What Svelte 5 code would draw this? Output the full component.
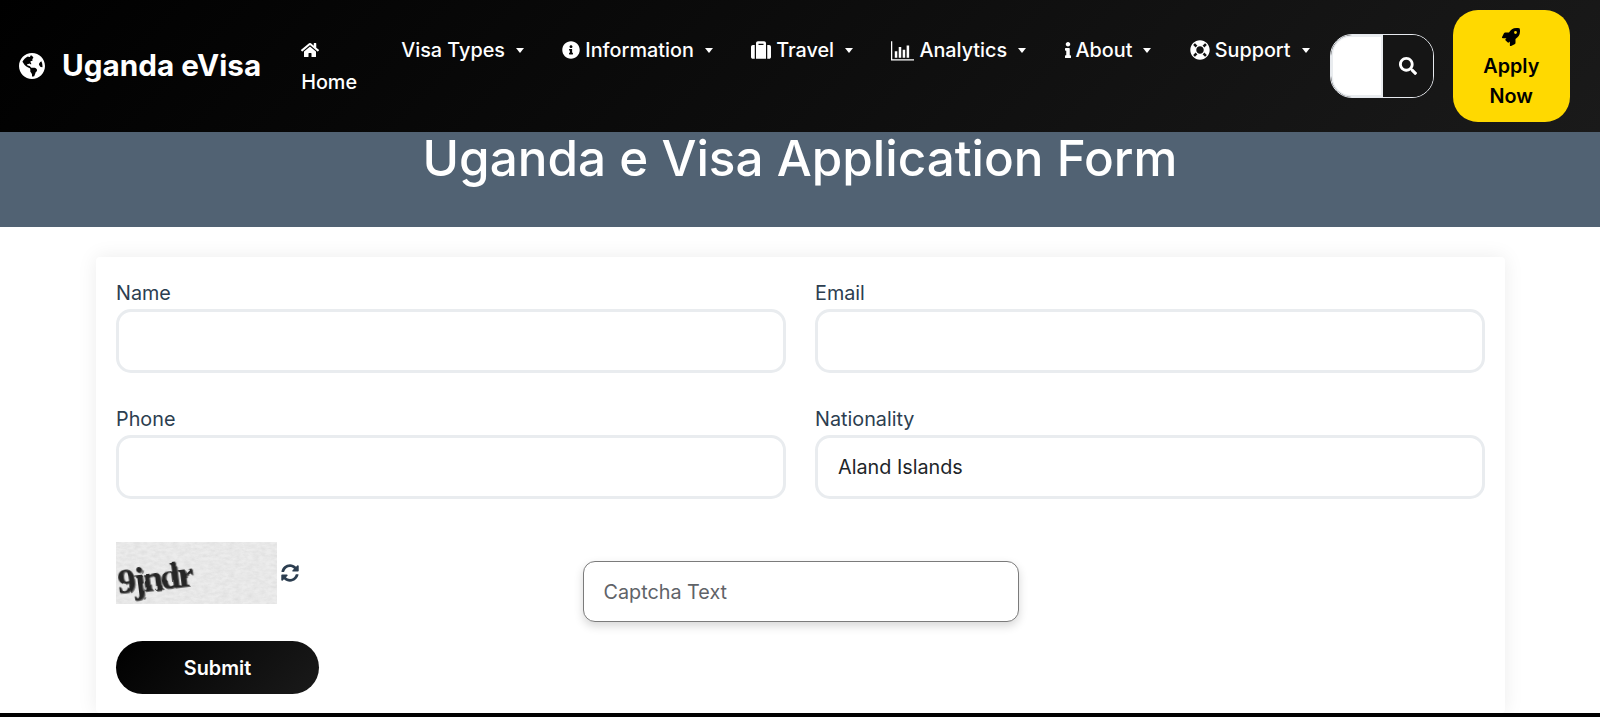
<script>
  // Font Awesome style icons, kept as plain path data
  const icons = {
    globe: { box: '0 0 496 512', d: 'M248 8C111.03 8 0 119.03 0 256s111.03 248 248 248 248-111.03 248-248S384.97 8 248 8zm82.29 357.6c-3.9 3.88-7.99 7.95-11.31 11.28-2.99 3-5.1 6.7-6.17 10.71-1.51 5.66-2.73 11.38-4.77 16.87l-17.39 46.85c-13.76 3-28 4.69-42.65 4.69v-27.38c1.69-12.62-7.64-36.26-22.63-51.25-6-6-9.37-14.14-9.37-22.63v-32.01c0-11.64-6.27-22.34-16.46-27.97-14.37-7.95-34.81-19.06-48.81-26.11-11.48-5.78-22.1-13.14-31.65-21.75l-.8-.72a114.792 114.792 0 0 1-18.06-20.74c-9.38-13.77-24.66-36.42-34.59-51.14 20.47-45.5 57.36-82.04 103.2-101.89l24.01 12.01C203.48 89.74 216 82.01 216 70.11v-11.3c7.99-1.29 16.12-2.11 24.45-2.41l28.3 28.3c6.25 6.25 6.25 16.38 0 22.63L264 112l-10.34 10.34c-3.12 3.12-3.12 8.19 0 11.31l4.69 4.69c3.12 3.12 3.12 8.19 0 11.31l-8 8a8.008 8.008 0 0 1-5.66 2.34h-8.99c-2.08 0-4.08.81-5.58 2.27l-9.92 9.65a8.008 8.008 0 0 0-1.58 9.31l15.59 31.19c2.66 5.32-1.21 11.58-7.15 11.58h-5.64c-1.93 0-3.79-.7-5.24-1.96l-9.28-8.06a16.017 16.017 0 0 0-15.55-3.1l-31.17 10.39a11.95 11.95 0 0 0-8.17 11.34c0 4.53 2.56 8.66 6.61 10.69l11.08 5.54c9.41 4.71 19.79 7.16 30.31 7.16s22.59 27.29 32 32h66.75c8.49 0 16.62 3.37 22.63 9.37l13.69 13.69a30.503 30.503 0 0 1 8.93 21.57 46.536 46.536 0 0 1-13.72 32.98zM417 274.25c-5.79-1.45-10.84-5-14.15-9.97l-17.98-26.97a23.97 23.97 0 0 1 0-26.62l19.59-29.38c2.32-3.47 5.5-6.29 9.24-8.15l12.98-6.49C440.2 193.59 448 223.87 448 256c0 8.67-.74 17.16-1.82 25.54L417 274.25z' },
    home: { box: '0 0 576 512', d: 'M280.37 148.26L96 300.11V464a16 16 0 0 0 16 16l112.06-.29a16 16 0 0 0 15.92-16V368a16 16 0 0 1 16-16h64a16 16 0 0 1 16 16v95.64a16 16 0 0 0 16 16.05L464 480a16 16 0 0 0 16-16V300L295.67 148.26a12.19 12.19 0 0 0-15.3 0zM571.6 251.47L488 182.56V44.05a12 12 0 0 0-12-12h-56a12 12 0 0 0-12 12v72.61L318.47 43a48 48 0 0 0-61 0L4.34 251.47a12 12 0 0 0-1.6 16.9l25.5 31A12 12 0 0 0 45.15 301l235.22-193.74a12.19 12.19 0 0 1 15.3 0L530.9 301a12 12 0 0 0 16.9-1.6l25.5-31a12 12 0 0 0-1.7-16.93z' },
    infoCircle: { box: '0 0 512 512', d: 'M256 8C119.043 8 8 119.083 8 256c0 136.997 111.043 248 248 248s248-111.003 248-248C504 119.083 392.957 8 256 8zm0 110c23.196 0 42 18.804 42 42s-18.804 42-42 42-42-18.804-42-42 18.804-42 42-42zm56 254c0 6.627-5.373 12-12 12h-88c-6.627 0-12-5.373-12-12v-24c0-6.627 5.373-12 12-12h12v-64h-12c-6.627 0-12-5.373-12-12v-24c0-6.627 5.373-12 12-12h64c6.627 0 12 5.373 12 12v100h12c6.627 0 12 5.373 12 12v24z' },
    suitcase: { box: '0 0 512 512', d: 'M128 480h256V80c0-26.5-21.5-48-48-48H176c-26.5 0-48 21.5-48 48v400zm64-384h128v32H192V96zm320 80v256c0 26.5-21.5 48-48 48h-48V128h48c26.5 0 48 21.5 48 48zM96 480H48c-26.5 0-48-21.5-48-48V176c0-26.5 21.5-48 48-48h48v352z' },
    chart: { box: '0 0 512 512', d: 'M0 48h28v400h484v28H0zM84 272h56v144H84zM172 176h56v240h-56zM260 240h56v176h-56zM348 144h56v272h-56z' },
    info: { box: '0 0 192 512', d: 'M20 424.229h20V279.771H20c-11.046 0-20-8.954-20-20V212c0-11.046 8.954-20 20-20h112c11.046 0 20 8.954 20 20v212.229h20c11.046 0 20 8.954 20 20V492c0 11.046-8.954 20-20 20H20c-11.046 0-20-8.954-20-20v-47.771c0-11.046 8.954-20 20-20zM96 0C56.235 0 24 32.235 24 72s32.235 72 72 72 72-32.235 72-72S135.764 0 96 0z' },
    lifeRing: { box: '0 0 512 512', d: 'M256 8C119.033 8 8 119.033 8 256s111.033 248 248 248 248-111.033 248-248S392.967 8 256 8zm173.696 119.559l-63.399 63.399c-10.987-18.559-26.67-34.252-45.255-45.255l63.399-63.399a218.396 218.396 0 0 1 45.255 45.255zM256 352c-53.019 0-96-42.981-96-96s42.981-96 96-96 96 42.981 96 96-42.981 96-96 96zM127.559 82.304l63.399 63.399c-18.559 10.987-34.252 26.67-45.255 45.255l-63.399-63.399a218.372 218.372 0 0 1 45.255-45.255zM82.304 384.441l63.399-63.399c10.987 18.559 26.67 34.252 45.255 45.255l-63.399 63.399a218.396 218.396 0 0 1-45.255-45.255zm302.137 45.255l-63.399-63.399c18.559-10.987 34.252-26.67 45.255-45.255l63.399 63.399a218.403 218.403 0 0 1-45.255 45.255z' },
    search: { box: '0 0 512 512', d: 'M505 442.7L405.3 343c-4.5-4.5-10.6-7-17-7H372c27.6-35.3 44-79.7 44-128C416 93.1 322.9 0 208 0S0 93.1 0 208s93.1 208 208 208c48.3 0 92.7-16.4 128-44v16.3c0 6.4 2.5 12.5 7 17l99.7 99.7c9.4 9.4 24.6 9.4 33.9 0l28.3-28.3c9.4-9.4 9.4-24.6.1-34zM208 336c-70.7 0-128-57.2-128-128 0-70.7 57.2-128 128-128 70.7 0 128 57.2 128 128 0 70.7-57.2 128-128 128z' },
    rocket: { box: '0 0 512 512', d: 'M505.05 19.1a15.89 15.89 0 0 0-12.2-12.2C460.65 0 435.46 0 410.36 0c-103.2 0-165.1 55.2-211.29 128H94.87A48 48 0 0 0 52 154.49l-49.42 98.8A24 24 0 0 0 24.07 288h103.77l-22.47 22.47a32 32 0 0 0 0 45.25l50.9 50.91a32 32 0 0 0 45.26 0L224 384.16V488a24 24 0 0 0 34.7 21.49l98.7-49.39a47.91 47.91 0 0 0 26.5-42.9V312.79c72.59-46.3 128-108.4 128-211.09.1-25.2.1-50.4-6.85-82.6zM384 168a40 40 0 1 1 40-40 40 40 0 0 1-40 40z' },
    sync: { box: '0 0 512 512', d: 'M370.72 133.28C339.458 104.008 298.888 87.962 255.848 88c-77.458.068-144.328 53.178-162.791 126.85-1.344 5.363-6.122 9.15-11.651 9.15H24.103c-7.498 0-13.194-6.807-11.807-14.176C33.933 94.924 134.813 8 256 8c66.448 0 126.791 26.136 171.315 68.685L463.03 40.97C478.149 25.851 504 36.559 504 57.941V192c0 13.255-10.745 24-24 24H345.941c-21.382 0-32.09-25.851-16.971-40.971l41.75-41.749zM32 296h134.059c21.382 0 32.09 25.851 16.971 40.971l-41.75 41.75c31.262 29.273 71.835 45.319 114.876 45.28 77.418-.07 144.315-53.144 162.787-126.849 1.344-5.363 6.122-9.15 11.651-9.15h57.304c7.498 0 13.194 6.807 11.807 14.176C478.067 417.076 377.187 504 256 504c-66.448 0-126.791-26.136-171.315-68.685L48.97 471.03C33.851 486.149 8 475.441 8 454.059V320c0-13.255 10.745-24 24-24z' }
  };

  const menu = [
    { label: 'Visa Types' },
    { label: 'Information', icon: 'infoCircle', size: 'md' },
    { label: 'Travel', icon: 'suitcase', size: 'lg' },
    { label: 'Analytics', icon: 'chart', size: 'xl' },
    { label: 'About', icon: 'info', size: 'sm' },
    { label: 'Support', icon: 'lifeRing', size: 'lg' }
  ];
</script>

{#snippet icon(name, cls)}
  <svg class={cls} viewBox={icons[name].box} aria-hidden="true"><path fill="currentColor" d={icons[name].d} /></svg>
{/snippet}

<div class="page">
  <nav class="navbar">
    <a class="brand" href="#top">
      {@render icon('globe', 'brand-icon')}
      <span>Uganda eVisa</span>
    </a>

    <ul class="menu">
      <li class="home">
        <a href="#top">
          {@render icon('home', 'home-icon')}
          <span>Home</span>
        </a>
      </li>
      {#each menu as item}
        <li>
          <a href="#top">
            {#if item.icon}
              {@render icon(item.icon, `nav-icon nav-icon-${item.size}`)}
            {/if}
            <span>{item.label}</span>
            <i class="caret"></i>
          </a>
        </li>
      {/each}
    </ul>

    <form class="search">
      <input type="text" aria-label="Search" />
      <button type="button" aria-label="Search">{@render icon('search', 'search-icon')}</button>
    </form>

    <a class="apply" href="#top">
      {@render icon('rocket', 'rocket')}
      <span>Apply<br />Now</span>
    </a>
  </nav>

  <header class="hero">
    <h1>Uganda e Visa Application Form</h1>
  </header>

  <main class="content">
    <form class="card">
      <div class="fields">
        <div class="field">
          <label for="name">Name</label>
          <input id="name" type="text" />
        </div>
        <div class="field">
          <label for="email">Email</label>
          <input id="email" type="text" />
        </div>
        <div class="field">
          <label for="phone">Phone</label>
          <input id="phone" type="text" />
        </div>
        <div class="field">
          <label for="nationality">Nationality</label>
          <select id="nationality">
            <option>Aland Islands</option>
          </select>
        </div>
      </div>

      <div class="captcha">
        <div class="captcha-left">
          <svg class="captcha-img" viewBox="0 0 161 62" aria-label="Captcha image">
            <defs>
              <filter id="paper" x="0" y="0" width="100%" height="100%">
                <feTurbulence type="fractalNoise" baseFrequency="0.16 0.32" numOctaves="3" seed="4" />
                <feColorMatrix values="0 0 0 0 0.55  0 0 0 0 0.55  0 0 0 0 0.55  1 0 0 0 -0.3" />
              </filter>
              <filter id="warp" x="-10%" y="-20%" width="120%" height="140%">
                <feTurbulence type="fractalNoise" baseFrequency="0.06" numOctaves="2" seed="8" result="n" />
                <feDisplacementMap in="SourceGraphic" in2="n" scale="4" />
                <feGaussianBlur stdDeviation="0.35" />
              </filter>
            </defs>
            <rect width="161" height="62" fill="#ececec" />
            <rect width="161" height="62" filter="url(#paper)" opacity="0.5" />
            <g filter="url(#warp)" transform="rotate(-7 40 40)">
              <text x="3" y="49" class="captcha-shadow">9jndr</text>
              <text x="2" y="48" class="captcha-text">9jndr</text>
            </g>
          </svg>
          <button type="button" class="refresh" aria-label="Refresh captcha">{@render icon('sync', 'sync-icon')}</button>
        </div>
        <input class="captcha-input" type="text" placeholder="Captcha Text" />
      </div>

      <button type="button" class="submit">Submit</button>
    </form>
  </main>

  <footer class="footer"></footer>
</div>

<style>
  :global(body) {
    margin: 0;
    background: #fff;
    font-family: Inter, "Liberation Sans", sans-serif;
  }

  .page {
    height: 717px;
    overflow: hidden;
    line-height: 1.8;
    color: #2c3e50;
  }

  a {
    color: inherit;
    text-decoration: none;
  }

  /* Navbar */
  .navbar {
    height: 132px;
    box-sizing: border-box;
    padding: 0 19px;
    display: flex;
    align-items: center;
    background: linear-gradient(135deg, #000 0%, #1a1a1a 100%);
    color: #fff;
  }

  .brand {
    display: flex;
    align-items: center;
    gap: 17px;
    width: 242px;
    margin-right: 21px;
    flex: none;
    font-size: 29.7px;
    font-weight: 700;
    white-space: nowrap;
  }

  .brand-icon {
    width: 26px;
    height: 28px;
    flex: none;
  }

  .menu {
    list-style: none;
    margin: 0;
    padding: 0;
    display: flex;
    align-items: flex-start;
    flex: none;
    font-size: 19.8px;
    font-weight: 500;
  }

  .menu a {
    display: flex;
    align-items: center;
    padding: 9.6px 19.2px;
    white-space: nowrap;
    line-height: 32px;
  }

  .menu .home {
    width: 100px;
  }

  .menu .home a {
    display: block;
  }

  .menu .home span {
    display: block;
  }

  :global(.home-icon) {
    display: block;
    width: 18px;
    height: 32px;
  }

  :global(.nav-icon) {
    width: auto;
    margin-right: 5px;
    flex: none;
  }

  :global(.nav-icon-sm) {
    height: 16px;
  }

  :global(.nav-icon-md) {
    height: 18px;
  }

  :global(.nav-icon-lg) {
    height: 20px;
  }

  :global(.nav-icon-xl) {
    height: 23px;
  }

  .caret {
    margin-left: 11px;
    border-top: 5px solid;
    border-left: 4.8px solid transparent;
    border-right: 4.8px solid transparent;
  }

  .search {
    margin: 0 0 0 1px;
    width: 104px;
    height: 64px;
    flex: none;
    box-sizing: border-box;
    display: flex;
    border: 1px solid #e6e9ee;
    border-radius: 22px;
    overflow: hidden;
  }

  .search input {
    width: 52px;
    flex: none;
    box-sizing: border-box;
    border: 2px solid #e9ecef;
    border-radius: 20px 0 0 20px;
    background: #fff;
    padding: 0;
  }

  .search button {
    flex: 1;
    border: 0;
    padding: 0;
    background: #151515;
    color: #fff;
    display: flex;
    align-items: center;
    justify-content: center;
  }

  :global(.search-icon) {
    width: 18px;
    height: 18px;
  }

  .apply {
    margin-left: 19px;
    width: 117px;
    height: 112px;
    flex: none;
    box-sizing: border-box;
    padding-top: 18px;
    border-radius: 25px;
    background: #ffd900;
    color: #000;
    text-align: center;
    font-size: 19.8px;
    font-weight: 600;
    line-height: 29.7px;
  }

  :global(.rocket) {
    display: block;
    width: 18px;
    height: 18px;
    margin: 0 auto 6px;
  }

  /* Hero */
  .hero {
    height: 95px;
    background: #516273;
    color: #fff;
    text-align: center;
  }

  .hero h1 {
    margin: 0;
    font-size: 49.4px;
    font-weight: 500;
    line-height: 52px;
  }

  /* Form card */
  .content {
    padding: 30px 95px 0 96px;
  }

  .card {
    height: 456px;
    box-sizing: border-box;
    padding: 20px;
    background: #fff;
    border-radius: 4px;
    box-shadow: 0 0 20px rgba(0, 0, 0, 0.08);
    overflow: hidden;
  }

  .fields {
    display: grid;
    grid-template-columns: 1fr 1fr;
    column-gap: 29px;
    row-gap: 30px;
  }

  .field {
    display: flex;
    flex-direction: column;
  }

  label {
    font-size: 19.8px;
    line-height: 32px;
    color: #2c3e50;
  }

  .field input,
  .field select {
    height: 64px;
    box-sizing: border-box;
    width: 100%;
    padding: 0 20px;
    border: 3px solid #e9ecef;
    border-radius: 15px;
    background: #fff;
    font: 400 19.8px Inter, "Liberation Sans", sans-serif;
    color: #212529;
    appearance: none;
  }

  .captcha {
    margin-top: 43px;
    display: grid;
    grid-template-columns: 1fr 436px 1fr;
    align-items: start;
  }

  .captcha-left {
    display: flex;
    align-items: center;
    gap: 4px;
    grid-column: 1;
    height: 62px;
  }

  .captcha-img {
    width: 161px;
    height: 62px;
    display: block;
  }

  .captcha-text,
  .captcha-shadow {
    font-family: "Liberation Serif", serif;
    font-weight: 700;
    font-size: 36px;
    letter-spacing: -2.5px;
  }

  .captcha-text {
    fill: #262626;
  }

  .captcha-shadow {
    fill: #666;
  }

  .refresh {
    border: 0;
    background: none;
    padding: 0;
    color: #2c3e50;
    display: flex;
  }

  :global(.sync-icon) {
    width: 18px;
    height: 18px;
  }

  .captcha-input {
    grid-column: 2;
    margin-top: 19px;
    height: 61px;
    box-sizing: border-box;
    padding: 0 20px;
    border: 1px solid #7b7b7b;
    border-radius: 12px;
    background: #fff;
    box-shadow: 0 4px 10px rgba(0, 0, 0, 0.16);
    font: 400 19.8px Inter, "Liberation Sans", sans-serif;
  }

  .captcha-input::placeholder {
    color: #5f6368;
    opacity: 1;
  }

  .submit {
    display: block;
    margin-top: 19px;
    width: 203px;
    height: 53px;
    border: 0;
    border-radius: 27px;
    background: linear-gradient(135deg, #000 0%, #1a1a1a 100%);
    color: #fff;
    font: 600 19.8px Inter, "Liberation Sans", sans-serif;
  }

  .footer {
    height: 40px;
    background: #000;
  }
</style>
